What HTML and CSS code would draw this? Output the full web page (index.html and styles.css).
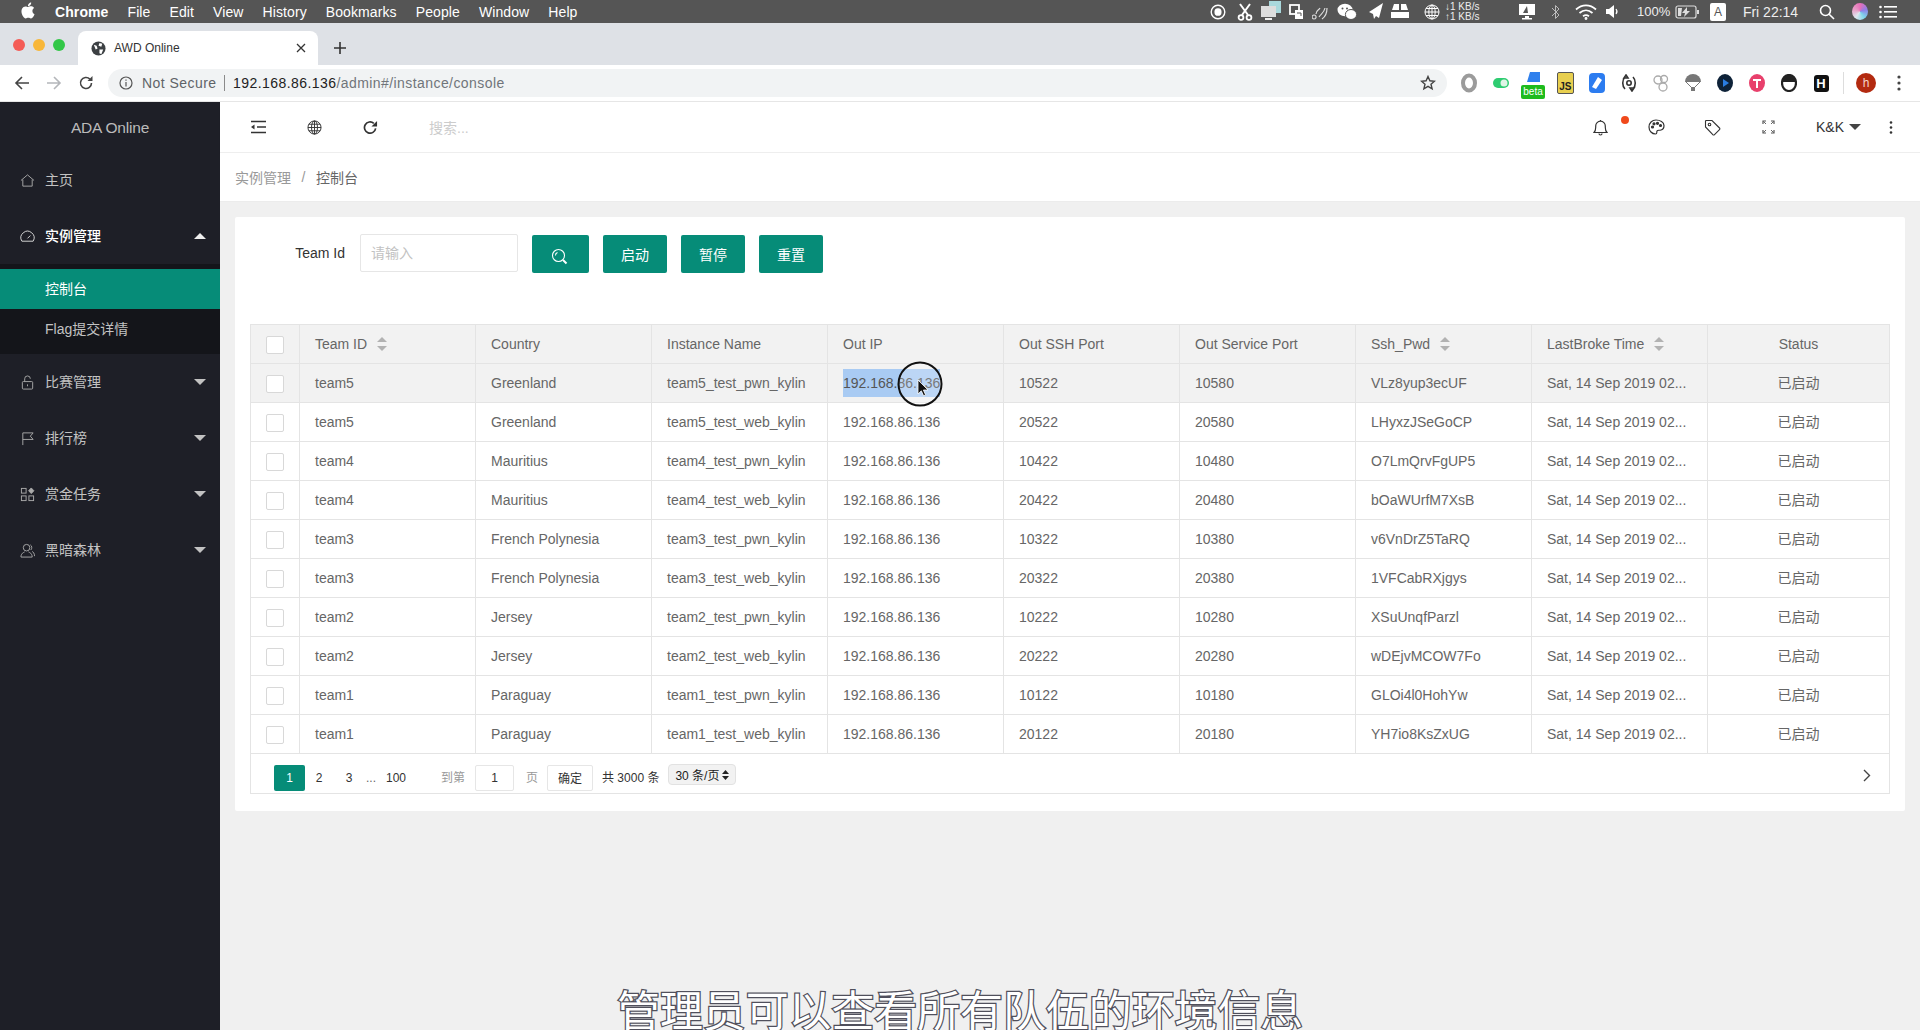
FILE: index.html
```html
<!DOCTYPE html>
<html lang="zh">
<head>
<meta charset="utf-8">
<title>AWD Online</title>
<link rel="stylesheet" href="styles.css">
</head>
<body>
<div class="menubar">
  <div class="menu-left">
    <svg class="apple" viewBox="0 0 24 24"><path fill="#fff" d="M12.152 6.896c-.948 0-2.415-1.078-3.96-1.04-2.04.027-3.91 1.183-4.961 3.014-2.117 3.675-.546 9.103 1.519 12.09 1.013 1.454 2.208 3.09 3.792 3.039 1.52-.065 2.09-.987 3.935-.987 1.831 0 2.35.987 3.96.948 1.637-.026 2.676-1.48 3.676-2.948 1.156-1.688 1.636-3.325 1.662-3.415-.039-.013-3.182-1.221-3.22-4.857-.026-3.04 2.48-4.494 2.597-4.559-1.429-2.09-3.623-2.324-4.39-2.376-2-.156-3.675 1.09-4.61 1.09zM15.53 3.83c.843-1.012 1.4-2.427 1.245-3.83-1.207.052-2.662.805-3.532 1.818-.78.896-1.454 2.338-1.273 3.714 1.338.104 2.715-.688 3.559-1.701"/></svg>
    <b>Chrome</b><span>File</span><span>Edit</span><span>View</span><span>History</span><span>Bookmarks</span><span>People</span><span>Window</span><span>Help</span>
  </div>
  <div class="status">
    <i><svg width="16" height="16" viewBox="0 0 16 16"><circle cx="8" cy="8" r="6.8" fill="none" stroke="#fff" stroke-width="1.4"/><rect x="4.5" y="4.2" width="7" height="7.6" rx="3.4" fill="#fff"/></svg></i>
    <i><svg width="16" height="18" viewBox="0 0 16 18"><path d="M3 1l8 11M13 1L5 12" stroke="#fff" stroke-width="2" fill="none"/><circle cx="4" cy="14.5" r="2.4" fill="none" stroke="#fff" stroke-width="1.8"/><circle cx="12" cy="14.5" r="2.4" fill="none" stroke="#fff" stroke-width="1.8"/></svg></i>
    <i><svg width="22" height="22" viewBox="0 0 22 22"><rect x="9" y="0" width="12" height="12" fill="#a9d8dc"/><rect x="1" y="5" width="15" height="11" fill="#ddd"/><rect x="5" y="17" width="7" height="2" fill="#eee"/></svg></i>
    <i><svg width="15" height="16" viewBox="0 0 15 16"><rect x="1" y="1" width="9" height="9" fill="none" stroke="#fff" stroke-width="1.8"/><rect x="6" y="6" width="8" height="9" fill="#fff"/><path d="M8 9h4v3" stroke="#555" fill="none"/></svg></i>
    <i><svg width="17" height="18" viewBox="0 0 17 18"><path d="M2 16a2 2 0 1 1 .1 0M4 11c0-4 3-4 4-6M7 14c2-3 5-4 6-9M10 16c3-2 5-6 5-11" fill="none" stroke="#ddd" stroke-width="1.2"/></svg></i>
    <i><svg width="20" height="18" viewBox="0 0 20 18"><ellipse cx="8" cy="7" rx="7.5" ry="6.2" fill="#fff"/><ellipse cx="14" cy="11.5" rx="5.6" ry="5" fill="#fff" stroke="#555"/><circle cx="5.5" cy="5.5" r="1" fill="#555"/><circle cx="10" cy="5.5" r="1" fill="#555"/></svg></i>
    <i><svg width="18" height="18" viewBox="0 0 18 18"><path d="M17 0L3 9l4 2 1 5 2-3 3 2z" fill="#fff"/></svg></i>
    <i><svg width="18" height="16" viewBox="0 0 18 16"><path d="M3 0h5v6H1zM10 0h5l2 6h-7zM0 8h18v6H0z" fill="#fff"/></svg></i>
    <div class="net">
      <svg width="16" height="16" viewBox="0 0 16 16" fill="none" stroke="#fff" stroke-width="1"><circle cx="8" cy="8" r="7"/><ellipse cx="8" cy="8" rx="3.2" ry="7"/><path d="M8 1v14M1 8h14M2 4.500h12M2 11.500h12"/></svg>
      <div class="speed"><span>↓1 KB/s</span><span>↑1 KB/s</span></div>
    </div>
    <i><svg width="18" height="18" viewBox="0 0 18 18"><path d="M1 1h16v11H1z" fill="#fff"/><path d="M9 3l-4 7h5z" fill="#555"/><path d="M7 13h4v2h3v1.500H4V15h3z" fill="#fff"/></svg></i>
    <i><svg width="11" height="16" viewBox="0 0 11 16"><path d="M2 4l7 7-3.500 3.500v-13L9 5l-7 7" fill="none" stroke="#bbb" stroke-width="1"/></svg></i>
    <i><svg width="22" height="16" viewBox="0 0 22 16" fill="none" stroke="#fff" stroke-width="1.700"><path d="M1 5.500c6-5.500 14-5.500 20 0M4.500 9c4-3.500 9-3.500 13 0M8 12.300c2-1.500 4-1.500 6 0"/><circle cx="11" cy="14.500" r=".6" fill="#fff"/></svg></i>
    <i><svg width="13" height="15" viewBox="0 0 13 15"><path d="M0 5h3l5-4v13l-5-4H0z" fill="#fff"/><path d="M10 5c1.200 1.500 1.200 3.500 0 5" stroke="#fff" fill="none" stroke-width="1.200"/></svg></i>
    <div class="batt"><span>100%</span><svg width="24" height="14" viewBox="0 0 24 14"><rect x="1" y="1" width="20" height="12" rx="2" fill="none" stroke="#ddd" stroke-width="1.200"/><rect x="22" y="5" width="2" height="4" fill="#ddd"/><path d="M3 3h4l-1 8H3zM12 2L7 8h3l-1 4 6-6h-3z" fill="#ddd"/></svg></div>
    <i><span class="abox">A</span></i>
    <i class="time">Fri 22:14</i>
    <i><svg width="16" height="16" viewBox="0 0 16 16" fill="none" stroke="#fff" stroke-width="1.600"><circle cx="6.500" cy="6.500" r="5"/><path d="M10.200 10.200L15 15"/></svg></i>
    <i><span class="siri"></span></i>
    <i><svg width="18" height="14" viewBox="0 0 18 14" fill="#fff"><circle cx="1.500" cy="2" r="1.300"/><circle cx="1.500" cy="7" r="1.300"/><circle cx="1.500" cy="12" r="1.300"/><rect x="5" y="1" width="13" height="1.600"/><rect x="5" y="6" width="13" height="1.600"/><rect x="5" y="11" width="13" height="1.600"/></svg></i>
  </div>
</div>

<div class="tabstrip">
  <div class="lights"><span class="red"></span><span class="yellow"></span><span class="green"></span></div>
  <div class="tab">
    <svg width="15" height="15" viewBox="0 0 16 16"><circle cx="8" cy="8" r="7.500" fill="#3c4043"/><path d="M3 4l3 1 1 3-2 1zM9 2l3 1-1 3-3-1zM9 9l4 0-2 5-2-1z" fill="#fff"/></svg>
    <span class="tab-title">AWD Online</span>
    <svg class="tab-x" width="10" height="10" viewBox="0 0 10 10"><path d="M1 1l8 8M9 1L1 9" stroke="#333" stroke-width="1.300"/></svg>
  </div>
  <svg class="newtab" width="14" height="14" viewBox="0 0 14 14"><path d="M7 1v12M1 7h12" stroke="#333" stroke-width="1.600"/></svg>
</div>

<div class="toolbar">
  <div class="navbtn"><svg width="16" height="16" viewBox="0 0 16 16" fill="none" stroke="#444" stroke-width="1.600"><path d="M15 8H2M8 2L2 8l6 6"/></svg></div>
  <div class="navbtn"><svg width="16" height="16" viewBox="0 0 16 16" fill="none" stroke="#b4b6ba" stroke-width="1.600"><path d="M1 8h13M8 2l6 6-6 6"/></svg></div>
  <div class="navbtn"><svg width="16" height="16" viewBox="0 0 16 16" fill="none" stroke="#444" stroke-width="1.600"><path d="M13.500 8a5.500 5.500 0 1 1-1.600-3.900"/><path d="M14.500 1v5h-5z" fill="#444" stroke="none"/></svg></div>
  <div class="omni">
    <svg width="14" height="14" viewBox="0 0 14 14" fill="none" stroke="#555" stroke-width="1.200"><circle cx="7" cy="7" r="6"/><path d="M7 6v4.500M7 3.500v1.300"/></svg>
    <span class="notsecure">Not Secure</span>
    <span class="omni-sep"></span>
    <span class="url"><b>192.168.86.136</b>/admin#/instance/console</span>
    <svg class="star" width="16" height="16" viewBox="0 0 16 16"><path d="M8 1.500l1.900 4.300 4.600.4-3.500 3 1.100 4.600L8 11.300l-4.100 2.500L5 9.200l-3.500-3 4.600-.4z" fill="none" stroke="#444" stroke-width="1.400"/></svg>
  </div>
  <div class="exts">
    <i><svg width="16" height="20" viewBox="0 0 16 20"><ellipse cx="8" cy="10" rx="6" ry="7.500" fill="none" stroke="#9b9b9b" stroke-width="4"/></svg></i>
    <i><svg width="16" height="10" viewBox="0 0 16 10"><rect width="16" height="10" rx="5" fill="#2ecc71"/><circle cx="11" cy="5" r="3.500" fill="#dff5e6"/></svg></i>
    <i class="betabox"><svg width="14" height="10" viewBox="0 0 14 10"><path d="M4 0h10v10H1z" fill="#2f80ed"/></svg><span class="beta">beta</span></i>
    <i><span class="js">JS</span></i>
    <i><svg width="16" height="20" viewBox="0 0 16 20"><rect width="16" height="20" rx="4" fill="#2c7cf0"/><path d="M9 4l4 3-6 9-4-2z" fill="#fff"/></svg></i>
    <i><svg width="16" height="18" viewBox="0 0 16 18" fill="none" stroke="#333" stroke-width="1.600"><path d="M4 3C1 6 1 12 4 15M12 3c3 3 3 9 0 12M5 1l2 3H3zM11 17l-2-3h4z"/><circle cx="8" cy="9" r="2.200"/></svg></i>
    <i><svg width="16" height="18" viewBox="0 0 16 18" fill="none" stroke="#aaa" stroke-width="1.300"><circle cx="5" cy="6" r="4"/><circle cx="11" cy="5" r="3.500"/><circle cx="10" cy="13" r="4"/></svg></i>
    <i><svg width="16" height="18" viewBox="0 0 16 18"><path d="M0 8a8 8 0 0 1 16 0z" fill="#777"/><path d="M1 8l6 6M15 8l-6 6" stroke="#777"/><rect x="6" y="13" width="4" height="4" fill="#777"/></svg></i>
    <i><svg width="16" height="18" viewBox="0 0 16 18"><ellipse cx="8" cy="9" rx="8" ry="9" fill="#0e2238"/><path d="M6 5l6 4-6 4z" fill="#2a7de1"/></svg></i>
    <i><svg width="16" height="18" viewBox="0 0 16 18"><ellipse cx="8" cy="9" rx="8" ry="9" fill="#e8406c"/><path d="M4 5h8v2H9v7H7V7H4z" fill="#fff"/></svg></i>
    <i><svg width="16" height="18" viewBox="0 0 16 18"><ellipse cx="8" cy="9" rx="7" ry="8" fill="#fff" stroke="#222" stroke-width="2.200"/><path d="M2 5a6 4 0 0 1 12 0v3H2z" fill="#222"/></svg></i>
    <i><span class="hbox">H</span></i>
  </div>
  <span class="tool-sep"></span>
  <span class="avatar">h</span>
  <svg class="tool-dots" width="4" height="16" viewBox="0 0 4 16" fill="#444"><circle cx="2" cy="2" r="1.600"/><circle cx="2" cy="8" r="1.600"/><circle cx="2" cy="14" r="1.600"/></svg>
</div>

<div class="app">
  <aside class="sidebar">
    <div class="logo">ADA Online</div>
    <div class="nav-item">
      <svg class="nav-ico" viewBox="0 0 16 16" fill="none" stroke="#aaa"><path d="M1 8l7-6 7 6M3 7v7h10V7"/></svg><span>主页</span>
    </div>
    <div class="nav-item open">
      <svg class="nav-ico" viewBox="0 0 16 16" fill="none" stroke="#ddd"><path d="M2 13a7 7 0 1 1 12 0zM8 10l3-3"/></svg><span>实例管理</span><em class="caret up"></em>
    </div>
    <div class="subnav">
      <div class="sub-item active">控制台</div>
      <div class="sub-item">Flag提交详情</div>
    </div>
    <div class="nav-item">
      <svg class="nav-ico" viewBox="0 0 16 16" fill="none" stroke="#aaa"><rect x="2.500" y="7" width="11" height="8" rx="1"/><path d="M5 7V4a3 3 0 0 1 6 0M8 10v2"/></svg><span>比赛管理</span><em class="caret"></em>
    </div>
    <div class="nav-item">
      <svg class="nav-ico" viewBox="0 0 16 16" fill="none" stroke="#aaa"><path d="M3 15V2h11l-3 3.500L14 9H3"/></svg><span>排行榜</span><em class="caret"></em>
    </div>
    <div class="nav-item">
      <svg class="nav-ico" viewBox="0 0 16 16" fill="none" stroke="#aaa"><rect x="1.500" y="1.500" width="5" height="5"/><rect x="1.500" y="9.500" width="5" height="5"/><rect x="9.500" y="9.500" width="5" height="5"/><path d="M12 1l2.800 3-2.800 3-2.800-3z" fill="#aaa"/></svg><span>赏金任务</span><em class="caret"></em>
    </div>
    <div class="nav-item">
      <svg class="nav-ico" viewBox="0 0 16 16" fill="none" stroke="#aaa"><circle cx="7" cy="5" r="3.500"/><path d="M1 15c0-4 3-5 4-5.500M9 9.500c1 .5 4 1.500 4 5.500H1M11 2c2 1 2 4 .5 5.500M13 9c1 .5 2.500 2 2.500 5"/></svg><span>黑暗森林</span><em class="caret"></em>
    </div>
  </aside>

  <main class="main">
    <div class="topnav">
      <div class="tn-cell"><svg width="17" height="14" viewBox="0 0 17 14"><path d="M1 1.500h15M7 7h9M1 12.500h15" stroke="#333" stroke-width="1.700"/><path d="M1 7l3.500-2.500v5z" fill="#333"/></svg></div>
      <div class="tn-cell"><svg width="15" height="15" viewBox="0 0 16 16" fill="none" stroke="#333" stroke-width="1"><circle cx="8" cy="8" r="7"/><ellipse cx="8" cy="8" rx="3.200" ry="7"/><path d="M8 1v14M1 8h14M2 4.500h12M2 11.500h12"/></svg></div>
      <div class="tn-cell"><svg width="15" height="15" viewBox="0 0 16 16" fill="none" stroke="#333" stroke-width="1.800"><path d="M13.500 9a6 6 0 1 1-2-5.500"/><path d="M15 1v6H9z" fill="#333" stroke="none"/></svg></div>
      <span class="search">搜索...</span>
      <div class="tn-right">
        <div class="tn-cell bell"><svg width="15" height="17" viewBox="0 0 15 17" fill="none" stroke="#333" stroke-width="1.200"><path d="M1 13.500h13c-2-2-1.700-3.500-1.700-6.500a4.800 4.800 0 0 0-9.600 0c0 3 .3 4.500-1.700 6.500zM6 14.500a1.500 1.500 0 0 0 3 0M7.500 1v1"/></svg><span class="dot"></span></div>
        <div class="tn-cell"><svg width="17" height="16" viewBox="0 0 17 16" fill="none" stroke="#333" stroke-width="1.200"><path d="M8 1C4 1 1 4 1 8s3 7 6.500 7c2 0 1-2 1.500-3s2-.5 4-1 3-3 3-4.500C16 3 12 1 8 1z"/><circle cx="4.500" cy="8" r="1" fill="#333"/><circle cx="6" cy="4.800" r="1" fill="#333"/><circle cx="9.500" cy="4.300" r="1" fill="#333"/><circle cx="12.500" cy="6.500" r="1" fill="#333"/></svg></div>
        <div class="tn-cell"><svg width="17" height="17" viewBox="0 0 17 17" fill="none" stroke="#333" stroke-width="1.100"><path d="M2 1.500h6l7.500 7.500a1.200 1.200 0 0 1 0 1.700l-5 5a1.200 1.200 0 0 1-1.700 0L1.500 8V2z"/><circle cx="5.500" cy="5.500" r="1.300"/></svg></div>
        <div class="tn-cell"><svg width="13" height="14" viewBox="0 0 13 14" fill="none" stroke="#555" stroke-width="1.200"><path d="M1 4V1h3M9 1h3v3M1 10v3h3M9 13h3v-3"/><path d="M1.500 1.500L4 4M11.500 1.500L9 4M1.500 12.500L4 10M11.500 12.500L9 10" stroke-width=".9"/></svg></div>
        <div class="user">K&amp;K<em class="caret dark"></em></div>
        <div class="tn-dots"><svg width="4" height="13" viewBox="0 0 4 13" fill="#333"><circle cx="2" cy="1.500" r="1.300"/><circle cx="2" cy="6.500" r="1.300"/><circle cx="2" cy="11.500" r="1.300"/></svg></div>
      </div>
    </div>
    <div class="crumbs"><span>实例管理</span><span class="slash">/</span><span class="cur">控制台</span></div>

    <div class="content">
      <section class="card">
        <div class="form">
          <label class="flabel">Team Id</label>
          <input class="finput" placeholder="请输入">
          <button class="btn btn-search"><svg width="17" height="17" viewBox="0 0 17 17" fill="none" stroke="#fff" stroke-width="1.100"><circle cx="7.500" cy="7.500" r="6"/><path d="M12 12l3.500 3.500" stroke-width="2"/><path d="M4.500 7.500a3 3 0 0 1 2-3"/></svg></button>
          <button class="btn">启动</button>
          <button class="btn">暂停</button>
          <button class="btn">重置</button>
        </div>

        <table class="grid">
          <colgroup><col class="c0"><col class="c1"><col class="c1"><col class="c1"><col class="c1"><col class="c1"><col class="c1"><col class="c1"><col class="c1"><col></colgroup>
          <thead>
            <tr>
              <th><span class="cb"></span></th>
              <th>Team ID<span class="sort"></span></th>
              <th>Country</th>
              <th>Instance Name</th>
              <th>Out IP</th>
              <th>Out SSH Port</th>
              <th>Out Service Port</th>
              <th>Ssh_Pwd<span class="sort"></span></th>
              <th>LastBroke Time<span class="sort"></span></th>
              <th class="ctr">Status</th>
            </tr>
          </thead>
          <tbody>
            <tr class="hover"><td><span class="cb"></span></td><td>team5</td><td>Greenland</td><td>team5_test_pwn_kylin</td><td><span class="sel">192.168.86.136</span></td><td>10522</td><td>10580</td><td>VLz8yup3ecUF</td><td>Sat, 14 Sep 2019 02...</td><td class="ctr st">已启动</td></tr>
            <tr><td><span class="cb"></span></td><td>team5</td><td>Greenland</td><td>team5_test_web_kylin</td><td>192.168.86.136</td><td>20522</td><td>20580</td><td>LHyxzJSeGoCP</td><td>Sat, 14 Sep 2019 02...</td><td class="ctr st">已启动</td></tr>
            <tr><td><span class="cb"></span></td><td>team4</td><td>Mauritius</td><td>team4_test_pwn_kylin</td><td>192.168.86.136</td><td>10422</td><td>10480</td><td>O7LmQrvFgUP5</td><td>Sat, 14 Sep 2019 02...</td><td class="ctr st">已启动</td></tr>
            <tr><td><span class="cb"></span></td><td>team4</td><td>Mauritius</td><td>team4_test_web_kylin</td><td>192.168.86.136</td><td>20422</td><td>20480</td><td>bOaWUrfM7XsB</td><td>Sat, 14 Sep 2019 02...</td><td class="ctr st">已启动</td></tr>
            <tr><td><span class="cb"></span></td><td>team3</td><td>French Polynesia</td><td>team3_test_pwn_kylin</td><td>192.168.86.136</td><td>10322</td><td>10380</td><td>v6VnDrZ5TaRQ</td><td>Sat, 14 Sep 2019 02...</td><td class="ctr st">已启动</td></tr>
            <tr><td><span class="cb"></span></td><td>team3</td><td>French Polynesia</td><td>team3_test_web_kylin</td><td>192.168.86.136</td><td>20322</td><td>20380</td><td>1VFCabRXjgys</td><td>Sat, 14 Sep 2019 02...</td><td class="ctr st">已启动</td></tr>
            <tr><td><span class="cb"></span></td><td>team2</td><td>Jersey</td><td>team2_test_pwn_kylin</td><td>192.168.86.136</td><td>10222</td><td>10280</td><td>XSuUnqfParzl</td><td>Sat, 14 Sep 2019 02...</td><td class="ctr st">已启动</td></tr>
            <tr><td><span class="cb"></span></td><td>team2</td><td>Jersey</td><td>team2_test_web_kylin</td><td>192.168.86.136</td><td>20222</td><td>20280</td><td>wDEjvMCOW7Fo</td><td>Sat, 14 Sep 2019 02...</td><td class="ctr st">已启动</td></tr>
            <tr><td><span class="cb"></span></td><td>team1</td><td>Paraguay</td><td>team1_test_pwn_kylin</td><td>192.168.86.136</td><td>10122</td><td>10180</td><td>GLOi4l0HohYw</td><td>Sat, 14 Sep 2019 02...</td><td class="ctr st">已启动</td></tr>
            <tr><td><span class="cb"></span></td><td>team1</td><td>Paraguay</td><td>team1_test_web_kylin</td><td>192.168.86.136</td><td>20122</td><td>20180</td><td>YH7io8KsZxUG</td><td>Sat, 14 Sep 2019 02...</td><td class="ctr st">已启动</td></tr>
          </tbody>
        </table>

        <div class="pager">
          <span class="pg cur">1</span>
          <span class="pg">2</span>
          <span class="pg three">3</span>
          <span class="pg dots">...</span>
          <span class="pg hundred">100</span>
          <span class="goto">到第</span>
          <span class="pginput">1</span>
          <span class="goto page">页</span>
          <span class="pgok">确定</span>
          <span class="total">共 3000 条</span>
          <span class="pgsel">30 条/页<svg width="7" height="12" viewBox="0 0 7 12" fill="#222"><path d="M3.500 1L7 5H0zM3.500 11L0 7h7z"/></svg></span>
          <svg class="pgnext" width="8" height="13" viewBox="0 0 8 13" fill="none" stroke="#444" stroke-width="1.400"><path d="M1 1l5.500 5.500L1 12"/></svg>
        </div>
      </section>
    </div>
  </main>
</div>

<div class="cursor">
  <svg width="46" height="46" viewBox="0 0 46 46"><circle cx="23" cy="23" r="21.500" fill="rgba(255,255,255,.22)" stroke="#111" stroke-width="2"/><path d="M21 19v14l3.300-3.200 2.300 5 2-.9-2.200-4.900h4.600z" fill="#111" stroke="#fff" stroke-width=".8"/></svg>
</div>
<div class="subtitle">管理员可以查看所有队伍的环境信息</div>
</body>
</html>
```
FILE: styles.css
```css
* { box-sizing: border-box; }
html, body { margin: 0; height: 100%; }
body {
  width: 1920px;
  height: 1030px;
  overflow: hidden;
  position: relative;
  display: flex;
  flex-direction: column;
  font-family: "Liberation Sans", "Noto Sans CJK SC", sans-serif;
  font-size: 14px;
  color: #666;
  background: #f0f0f0;
}
i, em { font-style: normal; }

/* macOS menu bar */
.menubar {
  flex: 0 0 23px;
  height: 23px;
  background: #555;
  color: #fff;
  display: flex;
  justify-content: space-between;
  align-items: center;
  padding-right: 15px;
}
.menu-left { display: flex; align-items: center; gap: 19px; padding-left: 20px; font-size: 14px; letter-spacing: .1px; }
.apple { width: 16px; height: 17px; margin-bottom: 2px; }
.status {
  display: grid;
  grid-template-columns: 27px 27px 25px 27px 21px 32px 23px 27px 97px 34px 23px 38px 14px 81px 36px 69px 43px 23px 34px;
  align-items: center;
  height: 23px;
}
.status > i { display: flex; justify-content: center; align-items: center; }
.status .time { font-size: 14px; white-space: nowrap; color: #eee; }
.net { display: flex; align-items: center; gap: 5px; padding-left: 11px; }
.speed { display: flex; flex-direction: column; font-size: 10px; line-height: 10px; white-space: nowrap; color: #eee; }
.batt { display: flex; align-items: center; gap: 5px; padding-left: 18px; font-size: 13px; white-space: nowrap; color: #eee; }
.abox { width: 16px; height: 18px; background: #fff; color: #555; border-radius: 2px; font-size: 12px; line-height: 18px; text-align: center; }
.siri {
  width: 16px; height: 17px; border-radius: 50%;
  background: conic-gradient(#e86fb8, #8f7fe8, #7ed6ea, #dfe7ef, #e8a0c8, #e86fb8);
}

/* Chrome tabs */
.tabstrip {
  flex: 0 0 42px;
  background: #dee1e6;
  display: flex;
  align-items: flex-end;
  position: relative;
}
.lights { display: flex; gap: 8px; padding: 0 0 14px 13px; width: 78px; }
.lights span { width: 12px; height: 12px; border-radius: 50%; flex: none; }
.red { background: #f45c56; }
.yellow { background: #f8b73a; }
.green { background: #33c748; }
.tab {
  width: 240px;
  height: 34px;
  background: #fff;
  border-radius: 8px 8px 0 0;
  display: flex;
  align-items: center;
  padding: 0 12px 0 13px;
  color: #333;
  font-size: 12px;
}
.tab-title { margin-left: 8px; flex: 1; }
.newtab { margin: 0 0 10px 15px; }

/* Chrome toolbar */
.toolbar {
  flex: 0 0 37px;
  background: #fff;
  border-bottom: 1px solid #e6e6e6;
  display: flex;
  align-items: center;
  padding: 0 19px 0 6px;
}
.navbtn { width: 32px; display: flex; justify-content: center; }
.omni {
  flex: 1;
  height: 28px;
  margin-left: 6px;
  margin-bottom: 1px;
  background: #f1f3f4;
  border-radius: 14px;
  display: flex;
  align-items: center;
  padding: 0 11px 0 11px;
}
.notsecure { margin-left: 9px; color: #5f6368; font-size: 14px; letter-spacing: .45px; }
.omni-sep { width: 1px; height: 16px; background: #8a8a8a; margin: 0 8px 0 7.500px; }
.url { color: #70757a; font-size: 14px; letter-spacing: .43px; flex: 1; }
.url b { font-weight: 400; color: #222; }
.exts { display: flex; margin-left: 6px; }
.exts i { width: 32px; height: 28px; display: flex; justify-content: center; align-items: center; position: relative; }
.betabox svg { margin-bottom: 12px; }
.beta {
  position: absolute; left: 4px; top: 16px; width: 24px; height: 14px;
  background: #1dbb1d; color: #fff; font-size: 10px; line-height: 14px; text-align: center; border-radius: 2px;
}
.js {
  width: 17px; height: 22px; background: #e8cf4f; border: 1px solid #555; border-radius: 2px;
  color: #222; font-size: 10px; font-weight: 700; line-height: 28px; text-align: right; padding-right: 1px; overflow: hidden;
}
.hbox {
  width: 15px; height: 17px; background: #111; color: #fff; border-radius: 3px;
  font-size: 13px; font-weight: 700; line-height: 17px; text-align: center;
}
.tool-sep { width: 1px; height: 22px; background: #ddd; margin-left: 6px; }
.avatar {
  width: 20px; height: 20px; margin-left: 12px; border-radius: 50%;
  background: #b32a10; color: #f5d5c8; font-size: 12px; line-height: 20px; text-align: center;
}
.tool-dots { margin-left: 21px; }

/* app shell */
.app { flex: 1; display: flex; min-height: 0; }
.sidebar { flex: 0 0 220px; background: #1e1f27; color: #c2c2c2; }
.logo { height: 50px; line-height: 52px; text-align: center; font-size: 15.500px; color: #bbb; letter-spacing: -.2px; }
.nav-item {
  height: 56px;
  display: flex;
  align-items: center;
  padding-left: 20px;
  position: relative;
}
.nav-item span { margin-bottom: 2px; }
.nav-ico { width: 15px; height: 15px; margin-right: 10px; flex: none; }
.nav-item.open { color: #fff; font-weight: 500; }
.caret {
  position: absolute;
  right: 14px;
  top: 25px;
  border-left: 6px solid transparent;
  border-right: 6px solid transparent;
  border-top: 6px solid #c2c2c2;
}
.caret.up { border-top: 0; border-bottom: 6px solid #eee; }
.subnav { background: #14151a; padding: 5px 0; }
.sub-item { height: 40px; line-height: 40px; padding-left: 45px; }
.sub-item.active { background: #068c78; color: #fff; }

.main { flex: 1; display: flex; flex-direction: column; min-width: 0; }
.topnav {
  height: 51px;
  flex: none;
  background: #fff;
  border-bottom: 1px solid #eee;
  box-shadow: 0 1px 2px rgba(0,0,0,.03);
  display: flex;
  align-items: center;
  padding-left: 10px;
}
.tn-cell { width: 56px; display: flex; justify-content: center; align-items: center; position: relative; }
.search { margin-left: 31px; color: #ccc; font-size: 14px; }
.tn-right { margin-left: auto; display: flex; align-items: center; padding-right: 7px; }
.dot { position: absolute; left: 49px; top: -3px; width: 8px; height: 8px; border-radius: 50%; background: #f0491c; }
.user { width: 73px; padding-left: 20px; color: #333; font-size: 14px; position: relative; }
.caret.dark { border-top-color: #444; right: 8px; top: 5px; }
.tn-dots { width: 44px; display: flex; justify-content: center; }
.crumbs {
  height: 49px;
  flex: none;
  background: #fff;
  display: flex;
  align-items: center;
  padding: 0 0 1px 15px;
  color: #999;
  border-bottom: 1px solid #ececec;
}
.slash { margin: 0 10.500px; }
.crumbs .cur { color: #666; }

.content { flex: 1; padding: 15px 15px 0 15px; min-height: 0; }
.card { background: #fff; border-radius: 2px; padding: 17px 15px; }
.form { display: flex; align-items: flex-start; margin-bottom: 52px; height: 38px; }
.flabel { width: 95px; margin-right: 15px; text-align: right; color: #333; line-height: 39px; }
.finput {
  width: 158px; height: 38px; border: 1px solid #e6e6e6; border-radius: 2px; padding: 0 10px;
  font: inherit; outline: 0;
}
.finput::placeholder { color: #c2c2c2; }
.btn {
  width: 64px; height: 38px; margin-left: 14px; margin-top: 1px; border: 0; border-radius: 2px;
  background: #068c78; color: #fff; font: inherit; padding: 0;
}
.btn-search { width: 57px; display: flex; justify-content: center; align-items: center; }
.btn-search svg { margin: 5px 3px 0 0; }

.grid { width: 1640px; border-collapse: collapse; table-layout: fixed; }
.c0 { width: 49px; }
.c1 { width: 176px; }
.grid th, .grid td {
  height: 39px;
  padding: 0 15px;
  border: 1px solid #e4e4e4;
  text-align: left;
  font-weight: 400;
  color: #666;
  white-space: nowrap;
  overflow: hidden;
}
.grid th { background: #f2f2f2; }
.grid .hover td { background: #f2f2f2; }
.grid .ctr { text-align: center; }
.grid .st { padding-bottom: 2px; }
.grid th:first-child, .grid td:first-child { padding: 4px 0 0; text-align: center; }
.cb { display: inline-block; width: 18px; height: 18px; background: #fff; border: 1px solid #d8d8d8; border-radius: 2px; }
.sort {
  display: inline-block; position: relative; width: 10px; height: 14px; margin-left: 10px; vertical-align: -2px;
}
.sort::before, .sort::after {
  content: ""; position: absolute; left: 0;
  border-left: 5px solid transparent; border-right: 5px solid transparent;
}
.sort::before { top: 0; border-bottom: 5px solid #b2b2b2; }
.sort::after { bottom: 0; border-top: 5px solid #b2b2b2; }
.sel { background: #a9cbf3; color: #555; padding: 6px 0; }

.pager {
  height: 40px;
  border: 1px solid #e4e4e4;
  border-top: 0;
  display: flex;
  align-items: flex-start;
  padding: 11px 0 0 23px;
  font-size: 12px;
  color: #333;
}
.pg { width: 28px; height: 26px; line-height: 26px; text-align: center; }
.pg.cur { width: 31px; background: #068c78; color: #fff; border-radius: 2px; }
.pg.three { margin-left: 2px; }
.pg.dots { width: 16px; color: #666; }
.pg.hundred { width: 22px; margin-left: 6px; }
.goto { color: #999; margin-left: 34px; line-height: 26px; }
.goto.page { margin-left: 12px; }
.pginput { width: 39px; height: 26px; margin-left: 10px; border: 1px solid #e6e6e6; border-radius: 2px; text-align: center; line-height: 24px; color: #333; }
.pgok { width: 46px; height: 26px; margin-left: 9px; border: 1px solid #e6e6e6; border-radius: 2px; text-align: center; line-height: 26px; color: #333; }
.total { margin-left: 9px; line-height: 26px; }
.pgsel {
  margin-left: 9px; width: 68px; height: 21px; margin-top: -1px;
  background: #f2f2f2; border: 1px solid #e2e2e2; border-radius: 4px;
  display: flex; align-items: center; justify-content: center; gap: 3px; color: #222;
}
.pgnext { margin: 4px 18px 0 auto; }

/* overlays */
.cursor { position: absolute; left: 897px; top: 361px; width: 46px; height: 46px; }
.subtitle {
  position: absolute;
  left: 617px;
  top: 986px;
  width: 700px;
  font-size: 42.900px;
  line-height: 52px;
  white-space: nowrap;
  color: #fff;
  -webkit-text-stroke: 2.500px #50505c;
  paint-order: stroke fill;
}
```
